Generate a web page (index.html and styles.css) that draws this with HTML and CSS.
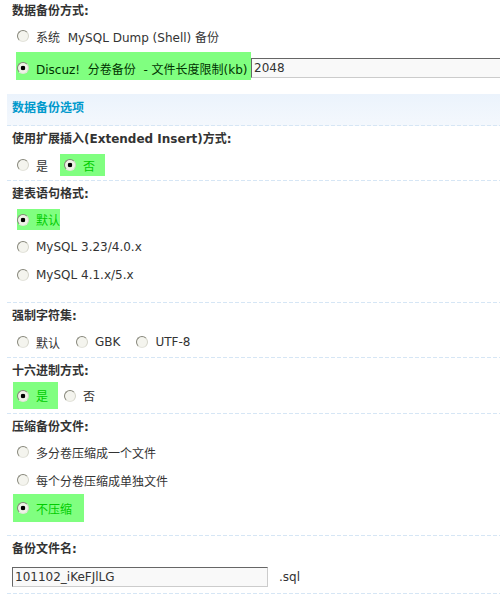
FILE: index.html
```html
<!DOCTYPE html>
<html lang="zh-CN">
<head>
  <meta charset="UTF-8">
  <title>数据备份</title>
  <link rel="stylesheet" href="styles.css">
</head>
<body>
  <div class="form">
    <!-- 备份方式 -->
    <div class="item item-top">
      <div class="label label-top">数据备份方式:</div>
      <ul class="opts stack">
        <li><label><input type="radio" name="type"> 系统&nbsp; MySQL Dump (Shell) 备份</label></li>
        <li class="wide">
          <label class="checked dark"><input type="radio" name="type" checked> Discuz!&nbsp; 分卷备份&nbsp; - 文件长度限制(kb)</label>
          <input type="text" class="txt txt-size" value="2048">
        </li>
      </ul>
    </div>

    <h3 class="partition">数据备份选项</h3>

    <div class="item">
      <div class="label">使用扩展插入(Extended Insert)方式:</div>
      <ul class="opts inline">
        <li><input type="radio" name="extinsert"> 是</li>
        <li class="checked"><input type="radio" name="extinsert" checked> 否</li>
      </ul>
    </div>

    <div class="item">
      <div class="label">建表语句格式:</div>
      <ul class="opts stack">
        <li class="checked tight"><input type="radio" name="sqlcompat" checked> 默认</li>
        <li><input type="radio" name="sqlcompat"> MySQL 3.23/4.0.x</li>
        <li><input type="radio" name="sqlcompat"> MySQL 4.1.x/5.x</li>
      </ul>
    </div>

    <div class="item">
      <div class="label">强制字符集:</div>
      <ul class="opts inline">
        <li><input type="radio" name="charset"> 默认</li>
        <li><input type="radio" name="charset"> GBK</li>
        <li><input type="radio" name="charset"> UTF-8</li>
      </ul>
    </div>

    <div class="item">
      <div class="label">十六进制方式:</div>
      <ul class="opts inline tall">
        <li class="checked"><input type="radio" name="usehex" checked> 是</li>
        <li><input type="radio" name="usehex"> 否</li>
      </ul>
    </div>

    <div class="item">
      <div class="label">压缩备份文件:</div>
      <ul class="opts stack">
        <li><input type="radio" name="usezip"> 多分卷压缩成一个文件</li>
        <li><input type="radio" name="usezip"> 每个分卷压缩成单独文件</li>
        <li class="checked"><input type="radio" name="usezip" checked> 不压缩</li>
      </ul>
    </div>

    <div class="item">
      <div class="label">备份文件名:</div>
      <div class="filename">
        <input type="text" class="txt txt-name" value="101102_iKeFJlLG">
        <span class="ext">.sql</span>
      </div>
    </div>
  </div>
</body>
</html>
```

FILE: styles.css
```css
body {
  margin: 0;
  font: 12px "DejaVu Sans", "Noto Sans CJK SC", sans-serif;
  color: #333;
  background: #fff;
  overflow: hidden;
}
ul {
  list-style: none;
  margin: 0;
  padding: 0;
}
.form {
  padding-left: 7px;
}

/* 每组设置下方的虚线 */
.item {
  padding-bottom: 1px;
  background: repeating-linear-gradient(to right, #d6e6f5 0 4px, transparent 4px 6px) left bottom / 100% 1px no-repeat;
}
.item-top {
  background: none;
  padding-bottom: 0;
}

.label {
  padding: 5px 0 3px 5px;
  line-height: 16px;
  font-weight: bold;
  white-space: nowrap;
}
.label-top {
  padding-top: 3px;
}

.partition {
  margin: 0;
  padding: 6px 0 10px 5px;
  line-height: 16px;
  font-size: 12px;
  font-weight: bold;
  color: #09c;
  background:
    repeating-linear-gradient(to right, #d6e6f5 0 4px, transparent 4px 6px) left bottom / 100% 1px no-repeat,
    linear-gradient(#ebf3fc, #f4f8fd);
}

/* 单选项 */
.opts {
  padding-left: 6px;
}
.opts li,
.opts label {
  display: flex;
  align-items: center;
  white-space: nowrap;
}
.opts input[type="radio"] {
  appearance: none;
  -webkit-appearance: none;
  box-sizing: border-box;
  width: 12px;
  height: 12px;
  margin: 0 7px 0 0;
  border: 1px solid;
  border-color: #86867a #d4d4ca #e4e4dc #86867a;
  border-radius: 50%;
  background: #f4f4ee;
  flex: none;
}
.opts input[type="radio"]:checked {
  background: radial-gradient(circle, #000 0 2px, #eef2e6 2.6px);
}
.checked {
  background: #80ff80;
  color: #0c0;
}
.checked.dark {
  color: #030;
}

.stack {
  padding-bottom: 13px;
}
.stack li {
  width: fit-content;
  height: 28px;
  box-sizing: border-box;
  padding: 0 12px 0 4px;
}
.stack li.tight {
  padding-top: 4px;
  padding-bottom: 3px;
  background-clip: content-box;
}
.stack li.wide {
  width: auto;
  margin-top: 2px;
  padding: 0;
  align-items: flex-end;
  overflow: hidden;
}
.item-top .stack {
  padding-bottom: 14px;
}
.wide label {
  width: 235px;
  height: 28px;
  box-sizing: border-box;
  margin-left: 3px;
  padding: 4px 0 0 1px;
  flex: none;
}

.inline {
  display: flex;
  padding-top: 4px;
  padding-bottom: 4px;
}
.inline li {
  height: 22px;
  padding: 0 10px 0 4px;
  margin-right: 2px;
}
.inline.tall {
  padding-top: 0;
}
.inline.tall li {
  height: 27px;
}

/* 文本框 */
.txt {
  box-sizing: border-box;
  height: 20px;
  padding: 0 2px;
  border: 1px solid;
  border-color: #666 #ccc #ccc #666;
  background: #f9f9f9;
  font: 12px "DejaVu Sans", sans-serif;
  color: #333;
  outline: none;
}
.txt-size {
  width: 300px;
  flex: none;
  margin-bottom: 2px;
}
.txt-name {
  width: 256px;
}
.filename {
  display: flex;
  align-items: center;
  padding: 7px 0 6px 5px;
}
.ext {
  margin-left: 11px;
}
```
